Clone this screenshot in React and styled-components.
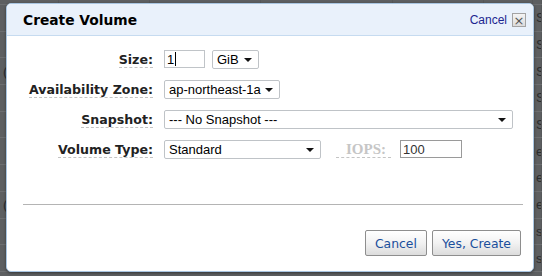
import styled, { createGlobalStyle } from "styled-components";

const GlobalStyle = createGlobalStyle`
  html, body {
    margin: 0;
    padding: 0;
    background: #5d5f61;
    overflow: hidden;
  }
  * { box-sizing: border-box; }
`;

const rowsRight = ["S", "S", "S", "S", "S", "et", "et", "et", "s", "s"];
const rowsLeft = ["", "", "(", "", "", "", "", "(", "", ""];

export default function App() {
  return (
    <Page>
      <GlobalStyle />
      <Backdrop>
        <HeadRow>
          {[0, 1, 2, 3, 4, 5, 6].map((i) => (
            <Cell key={i} />
          ))}
        </HeadRow>
        {rowsRight.map((t, i) => (
          <TableRow key={i}>
            <Cell>{rowsLeft[i]}</Cell>
            <Cell />
            <Cell />
            <Cell />
            <Cell />
            <Cell />
            <Cell>{t}</Cell>
          </TableRow>
        ))}
      </Backdrop>

      <Modal>
        <Header>
          <Title>Create Volume</Title>
          <HeaderLinks>
            <CancelLink href="#">Cancel</CancelLink>
            <CloseBox>×</CloseBox>
          </HeaderLinks>
        </Header>

        <Form>
          <Row>
            <LabelCell>
              <Label>Size:</Label>
            </LabelCell>
            <Controls>
              <TextBox $w={41} $h={18}>
                1<Caret />
              </TextBox>
              <Select $w={47}>
                <span>GiB</span>
                <Arrow />
              </Select>
            </Controls>
          </Row>
          <Row>
            <LabelCell>
              <Label>Availability Zone:</Label>
            </LabelCell>
            <Controls>
              <Select $w={116}>
                <span>ap-northeast-1a</span>
                <Arrow />
              </Select>
            </Controls>
          </Row>
          <Row>
            <LabelCell>
              <Label>Snapshot:</Label>
            </LabelCell>
            <Controls>
              <Select $w={349}>
                <span>--- No Snapshot ---</span>
                <Arrow />
              </Select>
            </Controls>
          </Row>
          <Row>
            <LabelCell>
              <Label>Volume Type:</Label>
            </LabelCell>
            <Controls>
              <Select $w={157}>
                <span>Standard</span>
                <Arrow />
              </Select>
              <DisabledLabel>IOPS:</DisabledLabel>
              <TextBox $w={62} $h={18} $dark>
                100
              </TextBox>
            </Controls>
          </Row>
        </Form>

        <Divider />

        <Footer>
          <Button>Cancel</Button>
          <Button>Yes, Create</Button>
        </Footer>
      </Modal>
    </Page>
  );
}

const Page = styled.div`
  position: relative;
  width: 542px;
  height: 276px;
  overflow: hidden;
  background: #5d5f61;
`;

const Backdrop = styled.div`
  display: flex;
  flex-direction: column;
  font-family: "Liberation Sans", Arial, sans-serif;
  font-size: 13px;
  color: #2a2c2e;
`;

const TableRow = styled.div`
  display: grid;
  grid-template-columns: 59px 91px 111px 132px 91px 49px 1fr;
  height: 26.7px;
  border-bottom: 1px solid #6c6e70;
  align-items: center;
`;

const HeadRow = styled(TableRow)`
  height: 5px;
  border-bottom: 1px solid #6c6e70;
`;

const Cell = styled.div`
  height: 100%;
  display: flex;
  align-items: center;
  padding-left: 3px;
  border-right: 1px solid #56585a;
  white-space: nowrap;
  overflow: hidden;
`;

const Modal = styled.div`
  position: absolute;
  left: 6px;
  top: 3px;
  width: 528px;
  height: 269px;
  background: #fff;
  border: 1px solid #a9c6e2;
  border-radius: 5px;
  box-shadow: 0 1px 3px rgba(0, 0, 0, 0.45);
  display: flex;
  flex-direction: column;
  overflow: hidden;
`;

const Header = styled.div`
  height: 32px;
  flex-shrink: 0;
  background: #e9f1fb;
  border-bottom: 1px solid #c6dbf0;
  display: flex;
  align-items: center;
  justify-content: space-between;
  padding: 0 7px 0 16px;
`;

const Title = styled.div`
  font-family: "DejaVu Sans", Verdana, sans-serif;
  font-weight: bold;
  font-size: 13.8px;
  color: #000;
  margin-top: 1px;
`;

const HeaderLinks = styled.div`
  display: flex;
  align-items: center;
  gap: 5px;
  margin-top: 1px;
`;

const CancelLink = styled.a`
  font-family: "Liberation Sans", Arial, sans-serif;
  font-size: 12px;
  color: #1c2590;
  text-decoration: none;
`;

const CloseBox = styled.div`
  width: 14px;
  height: 14px;
  border: 1px solid #a3a3a3;
  background: linear-gradient(#f4f4f4, #dcdcdc);
  display: flex;
  align-items: center;
  justify-content: center;
  font-family: "DejaVu Sans", sans-serif;
  font-size: 13px;
  line-height: 1;
  color: #555;
`;

const Form = styled.div`
  display: flex;
  flex-direction: column;
  padding-top: 8px;
`;

const Row = styled.div`
  display: flex;
  align-items: center;
  height: 30px;
`;

const LabelCell = styled.div`
  width: 146px;
  text-align: right;
  flex-shrink: 0;
`;

const Label = styled.span`
  display: inline-block;
  font-family: "DejaVu Sans", Verdana, sans-serif;
  font-weight: bold;
  font-size: 12.6px;
  color: #222;
  line-height: 15px;
  border-bottom: 1px dashed #c4c4c4;
`;

const Controls = styled.div`
  display: flex;
  align-items: center;
  margin-left: 11px;
  gap: 7px;
`;

const TextBox = styled.div`
  width: ${(p) => p.$w}px;
  height: ${(p) => p.$h}px;
  border: 1px solid ${(p) => (p.$dark ? "#9a9a9a" : "#c0c4c8")};
  background: #fff;
  display: flex;
  align-items: center;
  padding-left: 2px;
  font-family: "Liberation Sans", Arial, sans-serif;
  font-size: 13px;
  color: ${(p) => (p.$dark ? "#333" : "#000")};
`;

const Caret = styled.span`
  display: inline-block;
  width: 1px;
  height: 14px;
  background: #000;
  margin-left: 1px;
`;

const Select = styled.div`
  width: ${(p) => p.$w}px;
  height: 19px;
  border: 1px solid #bfc3c7;
  border-radius: 2px;
  background: #fff;
  display: flex;
  align-items: center;
  justify-content: space-between;
  padding: 0 6px 0 4px;
  font-family: "Liberation Sans", Arial, sans-serif;
  font-size: 13px;
  color: #000;
  white-space: nowrap;
`;

const Arrow = styled.span`
  width: 0;
  height: 0;
  border-left: 4px solid transparent;
  border-right: 4px solid transparent;
  border-top: 4px solid #111;
  margin-top: 1px;
`;

const DisabledLabel = styled.span`
  margin-left: 8px;
  margin-right: 2px;
  padding: 0 5px 0 10px;
  font-family: "Liberation Serif", "Times New Roman", serif;
  font-weight: bold;
  font-size: 15px;
  line-height: 16px;
  color: #c6c6c6;
  border-bottom: 1px dashed #c4c4c4;
`;

const Divider = styled.div`
  height: 1px;
  background: #b4b4b4;
  margin: 40px 10px 0 16px;
`;

const Footer = styled.div`
  display: flex;
  justify-content: flex-end;
  gap: 5px;
  padding: 25px 12px 0 0;
`;

const Button = styled.button`
  height: 26px;
  padding: 0 9px;
  border: 1px solid #8e8e8e;
  border-radius: 2px;
  background: linear-gradient(#ffffff, #f2f2f2 50%, #dcdcdc);
  font-family: "DejaVu Sans", Verdana, sans-serif;
  font-size: 12.4px;
  color: #1b4f9c;
  cursor: pointer;
`;
